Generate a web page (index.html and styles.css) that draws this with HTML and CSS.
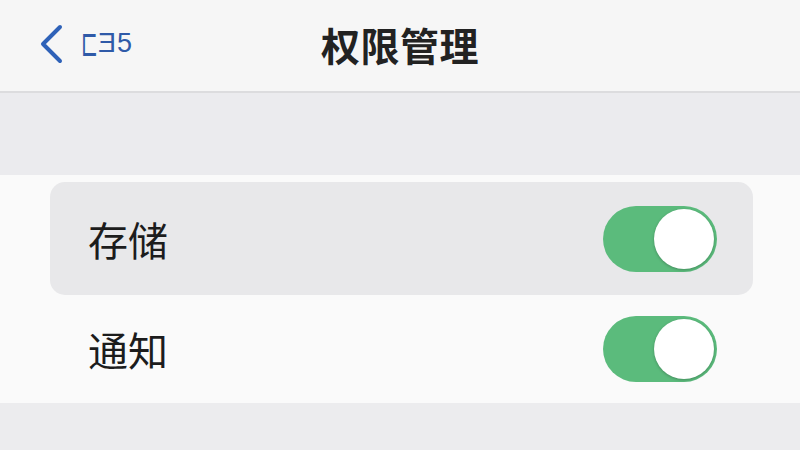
FILE: index.html
```html
<!DOCTYPE html>
<html lang="zh-CN">
<head>
  <meta charset="UTF-8">
  <meta name="viewport" content="width=device-width, initial-scale=1.0">
  <title>权限管理</title>
  <link rel="stylesheet" href="styles.css">
</head>
<body>
  <div class="navbar">
    <a class="back" href="#">
      <svg class="chevron" width="26" height="40" viewBox="0 0 26 40">
        <polyline points="22,3 5,20 22,37" fill="none" stroke="#2f62b8" stroke-width="4" stroke-linecap="round" stroke-linejoin="round"/>
      </svg>
      <span class="back-label"><span class="back-first">匚</span>Ǝ5</span>
    </a>
    <h1 class="title">权限管理</h1>
    <div></div>
  </div>
  <div class="spacer"></div>
  <div class="list">
    <div class="row active">
      <span class="label">存储</span>
      <div class="switch on"><div class="knob"></div></div>
    </div>
    <div class="row">
      <span class="label">通知</span>
      <div class="switch on"><div class="knob"></div></div>
    </div>
  </div>
  <div class="footer"></div>
</body>
</html>
```

FILE: styles.css
```css
* {
  margin: 0;
  padding: 0;
  box-sizing: border-box;
}
body {
  background: #ececee;
  font-family: "Noto Sans CJK SC", "Noto Sans", sans-serif;
  color: #1c1c1c;
  height: 450px;
  overflow: hidden;
}
.navbar {
  height: 93px;
  background: #f6f6f6;
  border-bottom: 2px solid #dcdcde;
  display: grid;
  grid-template-columns: 1fr auto 1fr;
  align-items: center;
  padding: 0 38px 4px 38px;
}
.back {
  display: flex;
  align-items: center;
  gap: 18px;
  text-decoration: none;
  color: #2f5aa8;
}
.chevron {
  display: block;
}
.back-label {
  font-family: "Liberation Sans", sans-serif;
  font-size: 27px;
  line-height: 1;
  letter-spacing: 1px;
  display: flex;
  align-items: center;
}
.back-first {
  font-family: "Noto Sans CJK SC", sans-serif;
  font-size: 26px;
  font-weight: 700;
  display: inline-block;
  transform: scaleX(0.6);
  margin: 0 -5px 0 -6px;
}
.title {
  font-size: 39px;
  font-weight: 700;
  color: #222;
  letter-spacing: 0.5px;
}
.spacer {
  height: 82px;
  background: #ebebee;
}
.list {
  background: #fafafa;
  padding: 7px 0 0;
}
.row {
  margin: 0 47px 0 50px;
  height: 108px;
  padding: 0 36px 0 38px;
  display: flex;
  align-items: center;
  justify-content: space-between;
}
.row.active {
  height: 113px;
  background: #e8e8ea;
  border-radius: 15px;
}
.label {
  font-size: 40px;
  line-height: 1;
}
.switch {
  width: 114px;
  height: 66px;
  border-radius: 33px;
  background: #dcdcde;
  padding: 3px;
  display: flex;
}
.switch.on {
  background: #5bbb7c;
  justify-content: flex-end;
}
.knob {
  width: 60px;
  height: 60px;
  border-radius: 50%;
  background: #fff;
  box-shadow: 0 1px 3px rgba(0,0,0,0.25);
}
.footer {
  height: 47px;
  background: #ececee;
}
```
